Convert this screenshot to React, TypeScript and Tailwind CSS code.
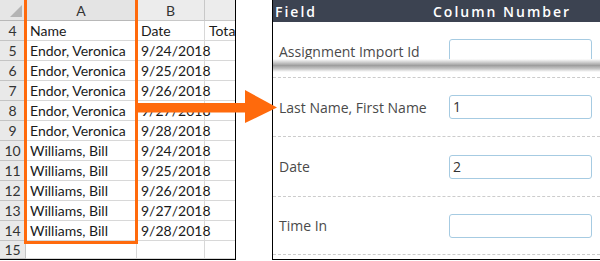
const rows = [
  { n: 4, a: "Name", b: "Date", c: "Tota" },
  { n: 5, a: "Endor, Veronica", b: "9/24/2018" },
  { n: 6, a: "Endor, Veronica", b: "9/25/2018" },
  { n: 7, a: "Endor, Veronica", b: "9/26/2018" },
  { n: 8, a: "Endor, Veronica", b: "9/27/2018" },
  { n: 9, a: "Endor, Veronica", b: "9/28/2018" },
  { n: 10, a: "Williams, Bill", b: "9/24/2018" },
  { n: 11, a: "Williams, Bill", b: "9/25/2018" },
  { n: 12, a: "Williams, Bill", b: "9/26/2018" },
  { n: 13, a: "Williams, Bill", b: "9/27/2018" },
  { n: 14, a: "Williams, Bill", b: "9/28/2018" },
  { n: 15, a: "", b: "" },
];

const fields = [
  { label: "Assignment Import Id", value: "", h: "h-[56px] pt-[3px]" },
  { label: "Last Name, First Name", value: "1", h: "h-[59px]" },
  { label: "Date", value: "2", h: "h-[60px]" },
  { label: "Time In", value: "", h: "h-[58px]" },
];

function Sheet() {
  return (
    <div className="w-[236px] h-[260px] border-r border-b border-black overflow-hidden font-['Lato',sans-serif] text-[14px] text-[#1a1a1a]">
      <div className="grid grid-cols-[26px_111px_68px_30px] grid-rows-[21px_repeat(11,20px)_18px]">
        {/* column headers */}
        <div className="bg-[#e6e6e6] border-r border-b border-[#b8b8b8]">
          <svg width="25" height="20" viewBox="0 0 25 20">
            <polygon points="22,5 22,17 10,17" fill="#b4b4b4" />
          </svg>
        </div>
        <div className="bg-[#e4e4e4] border-r border-b border-[#b8b8b8] flex items-center justify-center text-[#333]">A</div>
        <div className="bg-[#ececec] border-r border-b border-[#c8c8c8] flex items-center justify-center text-[#333]">B</div>
        <div className="bg-[#ececec] border-b border-[#c8c8c8]"></div>
        {rows.map((r) => (
          <>
            <div key={"n" + r.n} className="bg-[#e9e9e9] border-r border-b border-[#c4c4c4] flex items-center justify-center text-[#333]">{r.n}</div>
            <div key={"a" + r.n} className="border-r border-b border-[#d8d8d8] pl-[4px] leading-[19px] whitespace-nowrap">{r.a}</div>
            <div key={"b" + r.n} className="border-r border-b border-[#d8d8d8] pl-[4px] leading-[19px] whitespace-nowrap">{r.b}</div>
            <div key={"c" + r.n} className="border-b border-[#d8d8d8] pl-[4px] leading-[19px] whitespace-nowrap overflow-hidden">{r.c}</div>
          </>
        ))}
      </div>
    </div>
  );
}

function MappingPanel() {
  return (
    <div className="relative w-[328px] h-[260px] border-l border-b border-black font-['Open_Sans',sans-serif]">
      <div className="h-[22px] bg-[#3c4351] flex items-center text-white font-semibold text-[14px] tracking-[2px]">
        <div className="w-[160px] pl-[2px]">Field</div>
        <div>Column Number</div>
      </div>
      {fields.map((f) => (
        <div key={f.label} className={`${f.h} grid grid-cols-[176px_143px] items-center border-b border-dashed border-[#cccccc]`}>
          <div className="pl-[6px] text-[14px] text-[#4a4a4a] whitespace-nowrap">{f.label}</div>
          <div className="h-[24px] rounded-[3px] border border-[#a6cbe2] pl-[3px] text-[14px] leading-[22px] text-[#333]">{f.value}</div>
        </div>
      ))}
      {/* torn-edge shadow over the first row */}
      <div className="absolute left-0 right-0 top-[59px] h-[13px] bg-[linear-gradient(to_bottom,#ffffff,#cfcfcf_25%,#9e9e9e_50%,#c6c6c6_75%,#ffffff)]"></div>
    </div>
  );
}

export default function App() {
  return (
    <div className="relative w-[600px] h-[261px] bg-white flex overflow-hidden">
      <Sheet />
      <div className="w-[36px]"></div>
      <MappingPanel />
      {/* highlight around column A */}
      <div className="absolute left-[24px] top-[-4px] w-[114px] h-[248px] border-[3px] border-[#ff6a0c]"></div>
      {/* arrow */}
      <svg className="absolute left-[137px] top-[88px]" width="142" height="37" viewBox="0 0 142 37">
        <rect x="0" y="15" width="109" height="9.5" fill="#ff6a0c" />
        <polygon points="108,2 140,19.5 108,35" fill="#ff6a0c" />
      </svg>
    </div>
  );
}
